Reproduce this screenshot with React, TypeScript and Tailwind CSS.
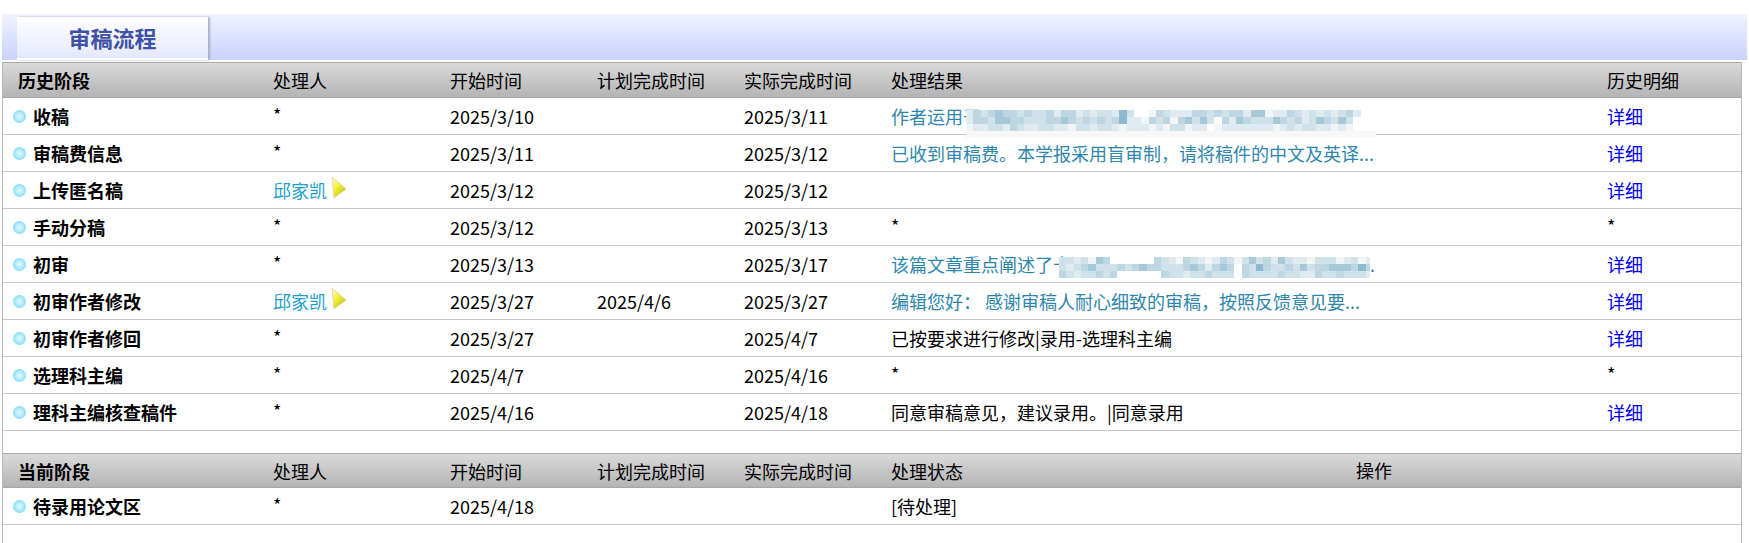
import React from 'react';

const shade: Record<string, string> = {
  a: '#8dbad1',
  b: '#a6c9da',
  c: '#bdd6e2',
  d: '#cfe1e9',
  e: '#e0ebf1',
  f: '#f0f5f8',
  w: '#ffffff',
  x: '#f7f7f7',
};

const blurOne = [
  'ecdcbccdcddcecceded' + 'deadwwfcdeeeccdcdccebbfeecdedededce',
  'eccdbbccdddccbcdcdc' + 'dcaeefcdcfcbdbdwcebcdddbcdcedbcdbd',
  'feeddecdeeddeefdde' + 'ddefeeefefddfeewfeeeeeeefededdeefef',
];
const blurTwo = [
  'ddedfbcwwwwwwcdefcdefecdfdbdcebdeefdddfedfeeedeb',
  'dedcbdddcdcbccdddcbcecbcwcdacddcdbdccbbbcacbbw',
  'cdeddcdcwwwwwwcddeddcdddwcddddcddeecddcdddeeedcefe',
];

const rows = [
  { stage: '收稿', person: '*', start: '2025/3/10', plan: '', done: '2025/3/11', result: 'blurOne', detail: '详细' },
  { stage: '审稿费信息', person: '*', start: '2025/3/11', plan: '', done: '2025/3/12', result: '已收到审稿费。本学报采用盲审制，请将稿件的中文及英译...', link: true, detail: '详细' },
  { stage: '上传匿名稿', person: '邱家凯', start: '2025/3/12', plan: '', done: '2025/3/12', result: '', detail: '详细' },
  { stage: '手动分稿', person: '*', start: '2025/3/12', plan: '', done: '2025/3/13', result: '*', detail: '*' },
  { stage: '初审', person: '*', start: '2025/3/13', plan: '', done: '2025/3/17', result: 'blurTwo', detail: '详细' },
  { stage: '初审作者修改', person: '邱家凯', start: '2025/3/27', plan: '2025/4/6', done: '2025/3/27', result: '编辑您好： 感谢审稿人耐心细致的审稿，按照反馈意见要...', link: true, detail: '详细' },
  { stage: '初审作者修回', person: '*', start: '2025/3/27', plan: '', done: '2025/4/7', result: '已按要求进行修改|录用-选理科主编', detail: '详细' },
  { stage: '选理科主编', person: '*', start: '2025/4/7', plan: '', done: '2025/4/16', result: '*', detail: '*' },
  { stage: '理科主编核查稿件', person: '*', start: '2025/4/16', plan: '', done: '2025/4/18', result: '同意审稿意见，建议录用。|同意录用', detail: '详细' },
];

const grid = 'grid grid-cols-[270px_177px_147px_147px_147px_716px_1fr]';

// pixelated redaction over the result text
function Mosaic({ lines, width, tail, className }: { lines: string[]; width: number; tail?: number; className: string }) {
  const size = 7.3;
  return (
    <svg width={width} height={28} viewBox={`0 0 ${width} 28`} className={className} shapeRendering="crispEdges">
      {lines.map((line, y) =>
        line.split('').map((ch, x) => (
          <rect key={`${y}-${x}`} x={x * size} y={y * 7} width={size + 0.5} height={7} fill={shade[ch]} />
        )),
      )}
      {tail ? <rect x={0} y={21} width={tail} height={7} fill={shade.x} /> : null}
    </svg>
  );
}

function Bullet() {
  return <span className="h-[13px] w-[13px] shrink-0 rounded-full bg-[radial-gradient(circle,#e2f9ff_0%,#a8e8fc_50%,#52c4f2_100%)]" />;
}

function Arrow({ id }: { id: string }) {
  return (
    <svg width="16" height="23" viewBox="0 0 16 23" className="-mt-[5px] ml-[4px]">
      <defs>
        <linearGradient id={id} x1="0" y1="0" x2="0.8" y2="1">
          <stop offset="0" stopColor="#fffde6" />
          <stop offset="0.45" stopColor="#f4f23c" />
          <stop offset="1" stopColor="#bdb800" />
        </linearGradient>
      </defs>
      <path d="M1 1 L15 13 L3 22 Z" fill={`url(#${id})`} stroke="#ead9a0" strokeWidth="1" strokeLinejoin="round" />
    </svg>
  );
}

function Header({ cols, tall }: { cols: string[]; tall?: boolean }) {
  return (
    <div className={`${grid} ${tall ? 'h-[36px]' : 'h-[35px]'} items-center border-y border-[#a8a8a8] bg-gradient-to-b from-[#dadada] to-[#b4b4b4] text-black`}>
      {cols.map((c, i) => (
        <div key={i} className={i === 0 ? 'pl-[15px] font-bold' : 'whitespace-nowrap'}>{c}</div>
      ))}
    </div>
  );
}

function Row({ row, index }: { row: (typeof rows)[number]; index: number }) {
  return (
    <div className={`${grid} h-[37px] items-center border-b border-[#c8c8c8] text-black`}>
      <div className="flex items-center gap-[7px] pl-[10px] font-bold">
        <Bullet />
        <span>{row.stage}</span>
      </div>
      <div className="flex items-center">
        {row.person === '*' ? (
          <span className="-mt-1">*</span>
        ) : (
          <>
            <span className="text-[#1f9fc9]">{row.person}</span>
            <Arrow id={`arrow-${index}`} />
          </>
        )}
      </div>
      <div>{row.start}</div>
      <div>{row.plan}</div>
      <div>{row.done}</div>
      <div className="relative flex h-full items-center whitespace-nowrap">
        {row.result === 'blurOne' && (
          <>
            <span className="text-[#2e86ab]">作者运用于</span>
            <Mosaic lines={blurOne} width={410} tail={410} className="absolute left-[75px] top-[12px]" />
          </>
        )}
        {row.result === 'blurTwo' && (
          <>
            <span className="text-[#2e86ab]">该篇文章重点阐述了十</span>
            <span className="absolute left-[479px] text-[#2e86ab]">.</span>
            <Mosaic lines={blurTwo} width={311} className="absolute left-[168px] top-[11px]" />
          </>
        )}
        {row.result !== 'blurOne' && row.result !== 'blurTwo' && (
          row.result === '*' ? <span className="-mt-1 block">*</span> : <span className={row.link ? 'text-[#2e86ab]' : ''}>{row.result}</span>
        )}
      </div>
      <div>
        {row.detail === '*' ? <span className="-mt-1 block">*</span> : <span className="text-[#0000ee]">{row.detail}</span>}
      </div>
    </div>
  );
}

export default function App() {
  return (
    <div className="min-h-[543px] w-[1749px] bg-white pl-[2px] pr-[2px] pt-[14px] font-['Noto_Sans_CJK_SC',sans-serif] text-[18px] leading-[24px]">
      <div className="flex h-[46px] w-full bg-gradient-to-b from-[#f1f3ff] to-[#c8d2ff] pl-[15px] pt-[3px]">
        <div className="flex h-[43px] w-[191px] items-center justify-center border-b-2 border-white bg-gradient-to-b from-[#ffffff] to-[#e4e8fc] pb-[2px] text-[22px] font-bold text-[#3f51a5] shadow-[2px_0_2px_#a9aec4]">
          审稿流程
        </div>
      </div>
      <div className="mt-[2px] mr-[5px] border-x border-[#b8b8b8]">
        <Header tall cols={['历史阶段', '处理人', '开始时间', '计划完成时间', '实际完成时间', '处理结果', '历史明细']} />
        {rows.map((r, i) => (
          <Row key={r.stage} row={r} index={i} />
        ))}
        <div className="h-[22px]" />
        <div className="relative">
          <Header cols={['当前阶段', '处理人', '开始时间', '计划完成时间', '实际完成时间', '处理状态', '']} />
          <span className="absolute left-[1353px] top-[5px]">操作</span>
        </div>
        <div className={`${grid} h-[37px] items-center border-b border-[#c8c8c8]`}>
          <div className="flex items-center gap-[7px] pl-[10px] font-bold">
            <Bullet />
            <span>待录用论文区</span>
          </div>
          <div><span className="-mt-1 block">*</span></div>
          <div>2025/4/18</div>
          <div />
          <div />
          <div>[待处理]</div>
          <div />
        </div>
        <div className="h-[19px]" />
      </div>
    </div>
  );
}
